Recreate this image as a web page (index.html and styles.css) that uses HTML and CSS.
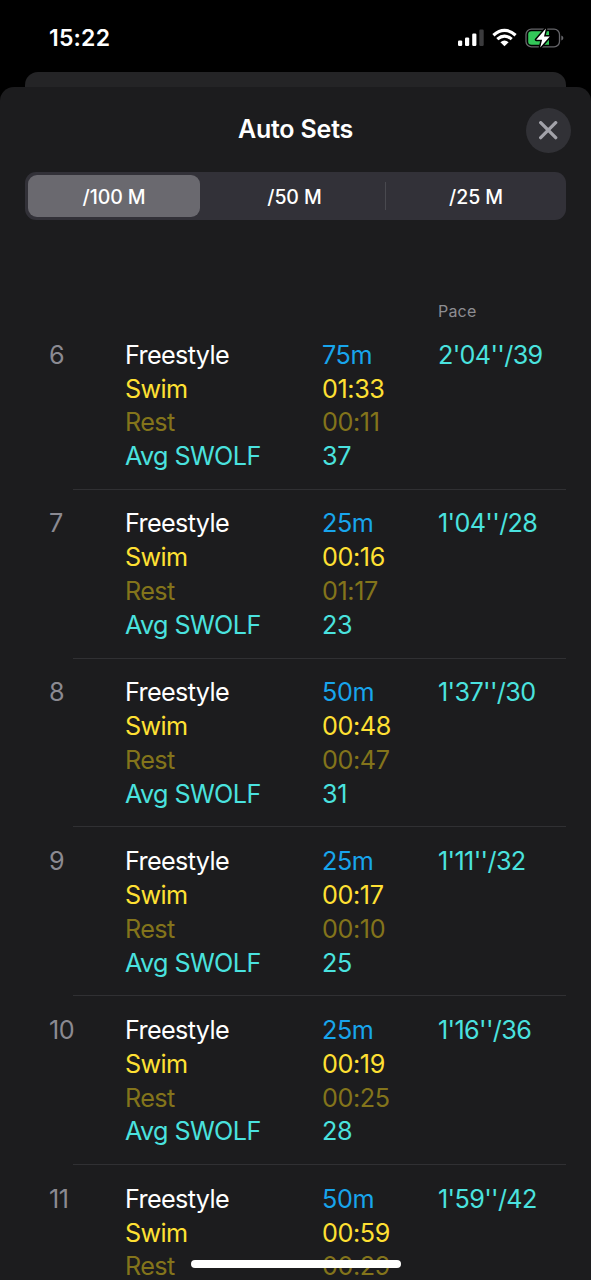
FILE: index.html
```
<!DOCTYPE html>
<html lang="en">
<head>
<meta charset="utf-8">
<title>Auto Sets</title>
<link rel="stylesheet" href="styles.css">
</head>
<body>
<div class="screen">
  <header class="status">
    <span class="time">15:22</span>
    <svg class="status-icons" width="108" height="24" viewBox="0 0 108 24">
      <g fill="#fff">
        <rect x="1" y="14.4" width="4.2" height="5.6" rx="1.2"/>
        <rect x="8" y="11.4" width="4.2" height="8.6" rx="1.2"/>
        <rect x="15.2" y="7.5" width="4.2" height="12.5" rx="1.2"/>
        <rect x="22.3" y="3.5" width="4.4" height="16.5" rx="1.2" fill="#3b3b3d"/>
        <path d="M47.5 20.3 L43.4 16.2 Q47.5 12.9 51.6 16.2 Z"/>
      </g>
      <g fill="none" stroke="#fff" stroke-width="3.2">
        <path d="M36.4 9.2 Q47.5 -.5 58.6 9.2"/>
        <path d="M40.3 13.1 Q47.5 7 54.7 13.1"/>
      </g>
      <rect x="69" y="3.2" width="33.5" height="17.6" rx="5.4" fill="none" stroke="#66666a" stroke-width="1.3"/>
      <path d="M104.3 9.4 Q106.4 10.2 106.4 12 Q106.4 13.8 104.3 14.6 Z" fill="#66666a"/>
      <path d="M74.5 5.3 H92 V18.7 H74.5 Q71.2 18.7 71.2 15.4 V8.6 Q71.2 5.3 74.5 5.3 Z" fill="#33c759"/>
      <path d="M88.9 2.6 L79.2 13.7 H85.1 L83.2 21.4 L92.8 10.5 H87 Z" fill="#fff" stroke="#000" stroke-width="3" stroke-linejoin="round" paint-order="stroke"/>
    </svg>
  </header>
  <div class="back-sheet"></div>
  <main class="sheet">
    <div class="titlebar">
      <h1>Auto Sets</h1>
      <button class="close" aria-label="Close">
        <svg width="19" height="19" viewBox="0 0 19 19"><path d="M1.7 1.7 L16.7 16.7 M16.7 1.7 L1.7 16.7" stroke="#a2a2a9" stroke-width="3.3" stroke-linecap="round"/></svg>
      </button>
    </div>
    <nav class="segments">
      <span class="segment active">/100 M</span>
      <span class="segment middle">/50 M</span>
      <i class="divider"></i>
      <span class="segment last">/25 M</span>
    </nav>
    <div class="column-head">Pace</div>
    <section class="sets">
      <article class="set"><div class="number">6</div><div class="labels"><p>Freestyle</p><p class="swim">Swim</p><p class="rest">Rest</p><p class="swolf">Avg SWOLF</p></div><div class="values"><p class="distance">75m</p><p class="swim">01:33</p><p class="rest">00:11</p><p class="swolf">37</p></div><div class="pace">2'04''/39</div></article>
      <article class="set"><div class="number">7</div><div class="labels"><p>Freestyle</p><p class="swim">Swim</p><p class="rest">Rest</p><p class="swolf">Avg SWOLF</p></div><div class="values"><p class="distance">25m</p><p class="swim">00:16</p><p class="rest">01:17</p><p class="swolf">23</p></div><div class="pace">1'04''/28</div></article>
      <article class="set"><div class="number">8</div><div class="labels"><p>Freestyle</p><p class="swim">Swim</p><p class="rest">Rest</p><p class="swolf">Avg SWOLF</p></div><div class="values"><p class="distance">50m</p><p class="swim">00:48</p><p class="rest">00:47</p><p class="swolf">31</p></div><div class="pace">1'37''/30</div></article>
      <article class="set"><div class="number">9</div><div class="labels"><p>Freestyle</p><p class="swim">Swim</p><p class="rest">Rest</p><p class="swolf">Avg SWOLF</p></div><div class="values"><p class="distance">25m</p><p class="swim">00:17</p><p class="rest">00:10</p><p class="swolf">25</p></div><div class="pace">1'11''/32</div></article>
      <article class="set"><div class="number">10</div><div class="labels"><p>Freestyle</p><p class="swim">Swim</p><p class="rest">Rest</p><p class="swolf">Avg SWOLF</p></div><div class="values"><p class="distance">25m</p><p class="swim">00:19</p><p class="rest">00:25</p><p class="swolf">28</p></div><div class="pace">1'16''/36</div></article>
      <article class="set"><div class="number">11</div><div class="labels"><p>Freestyle</p><p class="swim">Swim</p><p class="rest">Rest</p></div><div class="values"><p class="distance">50m</p><p class="swim">00:59</p><p class="rest">00:29</p></div><div class="pace">1'59''/42</div></article>
    </section>
  </main>
  <div class="home-indicator"></div>
</div>
</body>
</html>
```
FILE: styles.css
```
* { box-sizing: border-box; }
body { margin: 0; background: #000; color: #fff; font-family: Inter, "Liberation Sans", sans-serif; }
h1, p { margin: 0; }
.screen { position: relative; width: 591px; height: 1280px; overflow: hidden; display: flex; flex-direction: column; }
.status { height: 72px; flex: none; display: flex; justify-content: space-between; align-items: flex-start; padding: 26px 26px 0 49px; }
.time { font-size: 23px; line-height: 24px; font-weight: 600; letter-spacing: .2px; }
.status-icons { flex: none; }
.back-sheet { height: 15px; flex: none; margin: 0 25px; border-radius: 13px 13px 0 0; background: #242426; }
.sheet { flex: 1; min-height: 0; overflow: hidden; border-radius: 14px 14px 0 0; background: #1c1c1e; }
.titlebar { height: 85px; display: grid; grid-template-columns: 1fr auto 1fr; align-items: start; padding: 20px 20px 0; }
h1 { grid-column: 2; font-size: 25px; line-height: 44px; font-weight: 600; letter-spacing: -0.2px; }
.close { justify-self: end; width: 45px; height: 45px; margin-top: 1px; padding: 0; border: 0; border-radius: 50%; background: #313136; display: grid; place-items: center; }
.segments { height: 48px; margin: 0 25px; padding: 3px; border-radius: 11px; background: #323138; display: grid; grid-template-columns: 172px 185px 1px 1fr; align-items: center; }
.segment { height: 42px; line-height: 44px; text-align: center; font-size: 19.5px; font-weight: 500; letter-spacing: -.1px; }
.segment.active { border-radius: 9px; background: #6a696f; }
.segment.middle { padding-left: 4px; }
.segment.last { padding-left: 3px; }
.divider { height: 28px; background: #49494f; }
.column-head { height: 101px; padding: 81px 0 0 438px; font-size: 16px; line-height: 20px; color: #8d8d92; letter-spacing: .2px; }
.set { height: 168.8px; position: relative; display: grid; grid-template-columns: 76px 197px 116px 1fr; padding: 17.7px 0 0 49px; font-size: 25.2px; line-height: 33.85px; letter-spacing: -.4px; white-space: nowrap; }
.set:not(:last-child)::after { content: ""; position: absolute; left: 73px; right: 25px; bottom: 0; height: 1px; background: #303033; }
.labels { letter-spacing: -.62px; }
.pace { letter-spacing: -.65px; }
.number { color: #8b8a92; }
.distance { color: #18a5ec; }
.swim { color: #ffe033; }
.rest { color: #83741b; }
.swolf, .pace { color: #4ae2df; }
.home-indicator { position: absolute; left: 191px; top: 1260px; width: 210px; height: 8px; border-radius: 4px; background: #fff; }
```
